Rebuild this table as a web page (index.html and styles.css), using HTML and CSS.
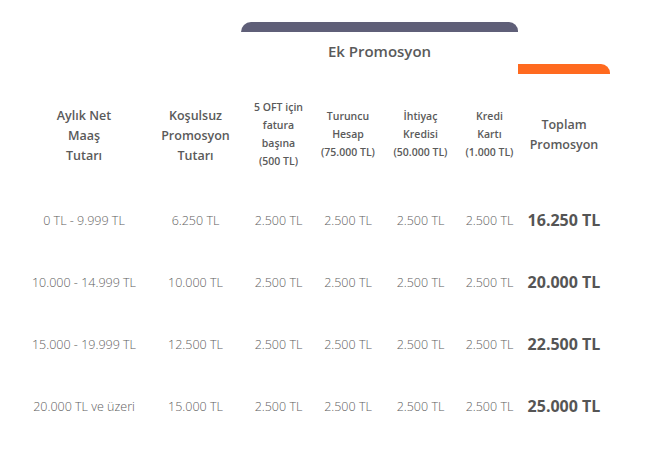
FILE: index.html
```html
<!DOCTYPE html>
<html lang="tr">
<head>
<meta charset="utf-8">
<link rel="stylesheet" href="styles.css">
</head>
<body>
<div class="promo">
  <div class="bar bar-dark"></div>
  <div class="ek-title">Ek Promosyon</div>
  <div class="bar bar-orange"></div>

  <div class="th th-main c1">Aylık Net<br>Maaş<br>Tutarı</div>
  <div class="th th-main c2">Koşulsuz<br>Promosyon<br>Tutarı</div>
  <div class="th th-sub c3">5 OFT için<br>fatura<br>başına<br>(500 TL)</div>
  <div class="th th-sub c4">Turuncu<br>Hesap<br>(75.000 TL)</div>
  <div class="th th-sub c5">İhtiyaç<br>Kredisi<br>(50.000 TL)</div>
  <div class="th th-sub c6">Kredi<br>Kartı<br>(1.000 TL)</div>
  <div class="th th-total c7">Toplam<br>Promosyon</div>

  <div class="td r1 c1">0 TL - 9.999 TL</div>
  <div class="td r1 c2">6.250 TL</div>
  <div class="td r1 c3">2.500 TL</div>
  <div class="td r1 c4">2.500 TL</div>
  <div class="td r1 c5">2.500 TL</div>
  <div class="td r1 c6">2.500 TL</div>
  <div class="td td-total r1 c7">16.250 TL</div>

  <div class="td r2 c1">10.000 - 14.999 TL</div>
  <div class="td r2 c2">10.000 TL</div>
  <div class="td r2 c3">2.500 TL</div>
  <div class="td r2 c4">2.500 TL</div>
  <div class="td r2 c5">2.500 TL</div>
  <div class="td r2 c6">2.500 TL</div>
  <div class="td td-total r2 c7">20.000 TL</div>

  <div class="td r3 c1">15.000 - 19.999 TL</div>
  <div class="td r3 c2">12.500 TL</div>
  <div class="td r3 c3">2.500 TL</div>
  <div class="td r3 c4">2.500 TL</div>
  <div class="td r3 c5">2.500 TL</div>
  <div class="td r3 c6">2.500 TL</div>
  <div class="td td-total r3 c7">22.500 TL</div>

  <div class="td r4 c1">20.000 TL ve üzeri</div>
  <div class="td r4 c2">15.000 TL</div>
  <div class="td r4 c3">2.500 TL</div>
  <div class="td r4 c4">2.500 TL</div>
  <div class="td r4 c5">2.500 TL</div>
  <div class="td r4 c6">2.500 TL</div>
  <div class="td td-total r4 c7">25.000 TL</div>
</div>
</body>
</html>
```

FILE: styles.css
```css
html, body {
  margin: 0;
  padding: 0;
  background: #ffffff;
}

body {
  font-family: "Open Sans", "Noto Sans", sans-serif;
  color: #5e5e5e;
}

.promo {
  display: grid;
  grid-template-columns: 132px 91px 75px 64px 81px 57px 92px;
  grid-template-rows: 10px 32px 10px 115px repeat(4, 62px);
  margin: 22px 0 0 18px;
  width: 592px;
}

.bar {
  height: 10px;
}

.bar-dark {
  grid-column: 3 / 7;
  grid-row: 1;
  background: #5f5f78;
  border-radius: 10px 9px 0 0;
}

.ek-title {
  grid-column: 3 / 7;
  grid-row: 2;
  text-align: center;
  font-size: 15px;
  font-weight: 600;
  line-height: 24px;
  padding-top: 7px;
  color: #5a5a5a;
}

.bar-orange {
  grid-column: 7;
  grid-row: 3;
  background: #ff6a1f;
  border-radius: 0 9px 0 0;
}

.c1 { grid-column: 1; }
.c2 { grid-column: 2; }
.c3 { grid-column: 3; }
.c4 { grid-column: 4; }
.c5 { grid-column: 5; }
.c6 { grid-column: 6; }
.c7 { grid-column: 7; }

.r1 { grid-row: 5; }
.r2 { grid-row: 6; }
.r3 { grid-row: 7; }
.r4 { grid-row: 8; }

.th {
  grid-row: 4;
  display: flex;
  align-items: center;
  justify-content: center;
  text-align: center;
  font-weight: 600;
  color: #5a5a5a;
}

.th-main {
  font-size: 12.5px;
  line-height: 20px;
  padding-top: 8px;
}

.th-sub {
  font-size: 10.5px;
  line-height: 18px;
  padding-top: 4px;
}

.th-total {
  font-size: 12.5px;
  line-height: 20px;
  padding-top: 6px;
}

.td {
  display: flex;
  align-items: center;
  justify-content: center;
  text-align: center;
  font-size: 12.5px;
  font-weight: 300;
  color: #5e5e5e;
  white-space: nowrap;
}

.td-total {
  font-size: 16px;
  font-weight: 700;
  color: #555555;
}
```
